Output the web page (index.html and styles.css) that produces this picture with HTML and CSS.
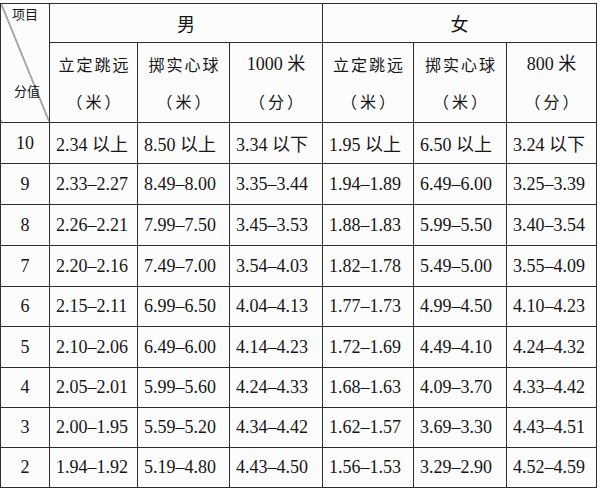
FILE: index.html
```html
<!DOCTYPE html>
<html lang="zh">
<head>
<meta charset="utf-8">
<title>评分标准</title>
<link rel="stylesheet" href="styles.css">
</head>
<body>
<table class="score">
  <colgroup>
    <col class="c-score"><col class="c-a"><col class="c-b"><col class="c-c"><col class="c-d"><col class="c-e"><col class="c-f">
  </colgroup>
  <thead>
    <tr class="h-gender">
      <th class="diag" rowspan="2">
        <div class="diag-in"><span class="t-item">项目</span><span class="t-score">分值</span></div>
      </th>
      <th class="gender" colspan="3">男</th>
      <th class="gender" colspan="3">女</th>
    </tr>
    <tr class="h-items">
      <th class="item"><div class="l-name">立定跳远</div><div class="l-unit">（米）</div></th>
      <th class="item"><div class="l-name">掷实心球</div><div class="l-unit">（米）</div></th>
      <th class="item"><div class="l-num">1000 米</div><div class="l-unit">（分）</div></th>
      <th class="item"><div class="l-name">立定跳远</div><div class="l-unit">（米）</div></th>
      <th class="item"><div class="l-name">掷实心球</div><div class="l-unit">（米）</div></th>
      <th class="item"><div class="l-num">800 米</div><div class="l-unit">（分）</div></th>
    </tr>
  </thead>
  <tbody>
    <tr class="r41"><td class="sc">10</td><td>2.34 以上</td><td>8.50 以上</td><td>3.34 以下</td><td>1.95 以上</td><td>6.50 以上</td><td>3.24 以下</td></tr>
    <tr class="r41"><td class="sc">9</td><td>2.33–2.27</td><td>8.49–8.00</td><td>3.35–3.44</td><td>1.94–1.89</td><td>6.49–6.00</td><td>3.25–3.39</td></tr>
    <tr class="r41"><td class="sc">8</td><td>2.26–2.21</td><td>7.99–7.50</td><td>3.45–3.53</td><td>1.88–1.83</td><td>5.99–5.50</td><td>3.40–3.54</td></tr>
    <tr class="r41"><td class="sc">7</td><td>2.20–2.16</td><td>7.49–7.00</td><td>3.54–4.03</td><td>1.82–1.78</td><td>5.49–5.00</td><td>3.55–4.09</td></tr>
    <tr class="r40"><td class="sc">6</td><td>2.15–2.11</td><td>6.99–6.50</td><td>4.04–4.13</td><td>1.77–1.73</td><td>4.99–4.50</td><td>4.10–4.23</td></tr>
    <tr class="r41"><td class="sc">5</td><td>2.10–2.06</td><td>6.49–6.00</td><td>4.14–4.23</td><td>1.72–1.69</td><td>4.49–4.10</td><td>4.24–4.32</td></tr>
    <tr class="r40"><td class="sc">4</td><td>2.05–2.01</td><td>5.99–5.60</td><td>4.24–4.33</td><td>1.68–1.63</td><td>4.09–3.70</td><td>4.33–4.42</td></tr>
    <tr class="r40"><td class="sc">3</td><td>2.00–1.95</td><td>5.59–5.20</td><td>4.34–4.42</td><td>1.62–1.57</td><td>3.69–3.30</td><td>4.43–4.51</td></tr>
    <tr class="r40"><td class="sc">2</td><td>1.94–1.92</td><td>5.19–4.80</td><td>4.43–4.50</td><td>1.56–1.53</td><td>3.29–2.90</td><td>4.52–4.59</td></tr>
  </tbody>
</table>
</body>
</html>
```

FILE: styles.css
```css
html, body {
  margin: 0;
  padding: 0;
  background: #fcfcfc;
}

body {
  padding-top: 3px;
  font-family: "Liberation Serif", "Noto Sans CJK SC", serif;
  color: #161616;
}

.score {
  border-collapse: collapse;
  table-layout: fixed;
  width: 596px;
}

.c-score { width: 49px; }
.c-a { width: 88px; }
.c-b { width: 92px; }
.c-c { width: 93px; }
.c-d { width: 91px; }
.c-e { width: 93px; }
.c-f { width: 90px; }

.score th,
.score td {
  border: 1px solid #2e2e2e;
  padding: 0;
  font-weight: normal;
}

.h-gender { height: 39px; }
.h-items { height: 80px; }

.gender {
  text-align: center;
  font-family: "Noto Sans CJK SC", sans-serif;
  font-size: 18px;
}

.item {
  text-align: center;
  vertical-align: middle;
  font-family: "Liberation Serif", "Noto Sans CJK SC", serif;
}

.l-name {
  font-family: "Noto Sans CJK SC", sans-serif;
  font-size: 16px;
  letter-spacing: 2px;
  padding-left: 2px;
  line-height: 37px;
}

.l-num {
  font-size: 18px;
  line-height: 37px;
}

.l-unit {
  font-family: "Noto Sans CJK SC", sans-serif;
  font-size: 16px;
  letter-spacing: 3px;
  padding-left: 3px;
  line-height: 37px;
}

.diag {
  vertical-align: top;
  background: linear-gradient(to top right, transparent calc(50% - 0.8px), #2e2e2e 50%, transparent calc(50% + 0.8px));
}

.diag-in {
  display: flex;
  flex-direction: column;
  align-items: flex-start;
  height: 118px;
  padding-left: 11px;
  font-family: "Noto Sans CJK SC", sans-serif;
  font-size: 13px;
  line-height: 16px;
}

.t-item { margin-top: 2px; }
.t-score { margin-top: auto; margin-bottom: 23px; padding-left: 2px; }

.r41 { height: 41px; }
.r40 { height: 40px; }

.score td {
  font-size: 18px;
  padding-left: 6px;
  white-space: nowrap;
  vertical-align: middle;
}

.score td.sc {
  text-align: center;
  padding-left: 0;
}
```
